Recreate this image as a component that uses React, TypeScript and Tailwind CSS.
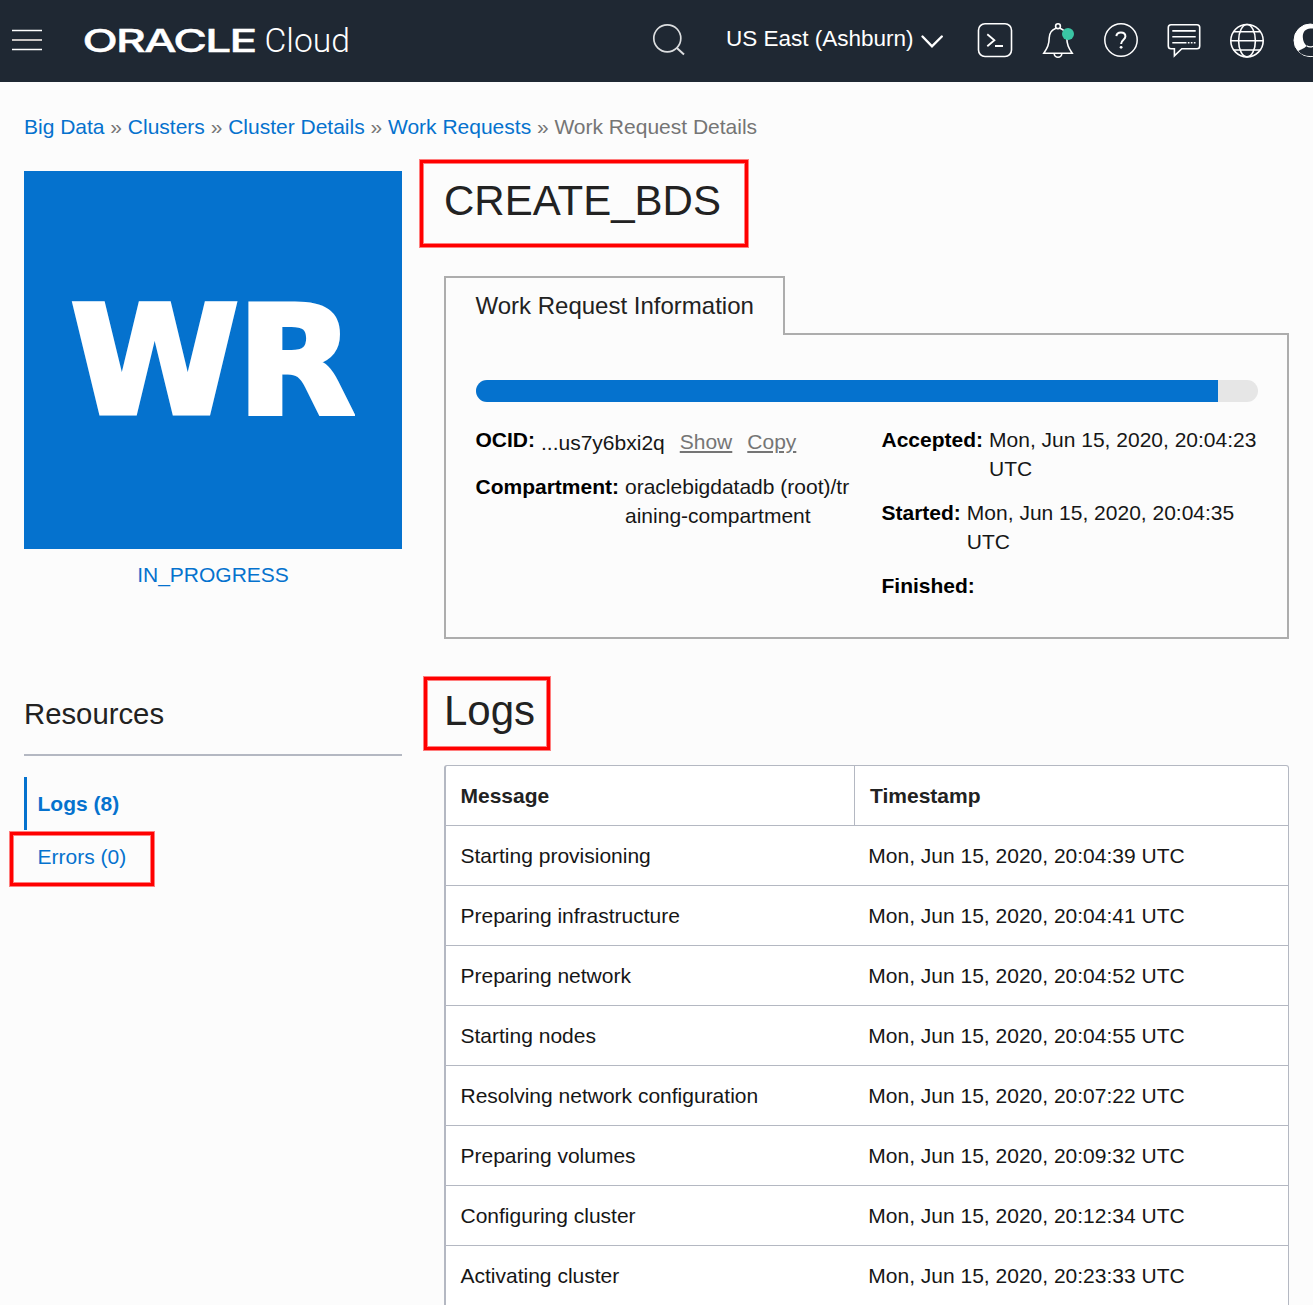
import type { ReactNode } from "react";

const logs = [
  ["Starting provisioning", "Mon, Jun 15, 2020, 20:04:39 UTC"],
  ["Preparing infrastructure", "Mon, Jun 15, 2020, 20:04:41 UTC"],
  ["Preparing network", "Mon, Jun 15, 2020, 20:04:52 UTC"],
  ["Starting nodes", "Mon, Jun 15, 2020, 20:04:55 UTC"],
  ["Resolving network configuration", "Mon, Jun 15, 2020, 20:07:22 UTC"],
  ["Preparing volumes", "Mon, Jun 15, 2020, 20:09:32 UTC"],
  ["Configuring cluster", "Mon, Jun 15, 2020, 20:12:34 UTC"],
  ["Activating cluster", "Mon, Jun 15, 2020, 20:23:33 UTC"],
];

const crumbs = ["Big Data", "Clusters", "Cluster Details", "Work Requests"];

const iconStroke = { fill: "none", stroke: "#fff", strokeWidth: 1.6 };

function Header() {
  return (
    <header className="flex h-[82px] shrink-0 items-start overflow-hidden bg-[#1f2833] pt-5 text-white">
      <svg className="ml-3 shrink-0" width="30" height="40" viewBox="12 20 30 40">
        <path d="M12 30.5H42M12 49.5H42" stroke="#fff" strokeWidth="1.3" />
        <path d="M12 40H42" stroke="#c9c5c3" strokeWidth="2" />
      </svg>
      <svg className="ml-[42px] shrink-0" width="266" height="40" viewBox="84 20 266 40" fill="#fff">
        <text x="82.5" y="52.4" fontFamily="Inter" fontWeight="500" fontSize="31" letterSpacing="-1.2" stroke="#fff" strokeWidth="0.4" textLength="173" lengthAdjust="spacingAndGlyphs">
          ORACLE
        </text>
        <text x="264.5" y="52.4" fontFamily="Roboto" fontWeight="300" fontSize="34" textLength="85.5" lengthAdjust="spacingAndGlyphs">
          Cloud
        </text>
      </svg>
      <svg className="ml-[300px] shrink-0" width="38" height="40" viewBox="650 20 38 40" fill="none" stroke="#dcdee0" strokeWidth="1.7">
        <circle cx="667.3" cy="38.3" r="13.5" />
        <path d="M676.6 47.8L684 54.6" strokeWidth="2" />
      </svg>
      <span className="ml-[38px] mt-[4px] w-[194px] shrink-0 whitespace-nowrap text-[22.5px] leading-[30px]">US East (Ashburn)</span>
      <svg className="shrink-0" width="24" height="40" viewBox="920 20 24 40" fill="none" stroke="#fff" strokeWidth="2.4" strokeLinecap="round">
        <path d="M922.5 36.5L932 46.3L941.8 36.5" />
      </svg>
      <svg className="ml-8 shrink-0" width="38" height="40" viewBox="976 20 38 40" {...iconStroke}>
        <rect x="978.5" y="23.7" width="33" height="32.8" rx="6.5" />
        <path d="M987.3 34.2L994.4 40.2L987.3 46.2M995 46H1003" strokeWidth="1.8" />
      </svg>
      <svg className="ml-[27px] shrink-0" width="36" height="40" viewBox="1041 20 36 40" {...iconStroke}>
        <circle cx="1058" cy="26.2" r="2.4" />
        <path d="M1055.9 28.2C1051 30 1049.3 33.5 1049.2 38C1049.1 44.5 1047.5 47.5 1043.8 53.3H1072.2C1068.5 47.5 1066.9 44.5 1066.8 38C1066.7 33.5 1065 30 1060.1 28.2" />
        <path d="M1054.2 53.5A3.8 3.8 0 0 0 1061.8 53.5" />
        <circle cx="1068" cy="34" r="6" fill="#3ac5a4" stroke="none" />
      </svg>
      <svg className="ml-[25px] shrink-0" width="38" height="40" viewBox="1102 20 38 40" {...iconStroke}>
        <circle cx="1121" cy="40" r="16.2" strokeWidth="1.5" />
        <path d="M1116.4 36.2C1116.6 33.8 1118.5 32.6 1120.9 32.6C1123.4 32.6 1125.4 34.1 1125.4 36.5C1125.4 39.6 1121.1 39.8 1121.1 43.9" strokeWidth="2" />
        <circle cx="1121.1" cy="47.3" r="1.4" fill="#fff" stroke="none" />
      </svg>
      <svg className="ml-[26px] shrink-0" width="36" height="40" viewBox="1166 20 36 40" {...iconStroke}>
        <path d="M1171 24.7H1197C1198.8 24.7 1199.7 25.6 1199.7 27.4V46C1199.7 47.8 1198.8 48.7 1197 48.7H1181.8L1174.4 55.8V48.7H1171C1169.2 48.7 1168.3 47.8 1168.3 46V27.4C1168.3 25.6 1169.2 24.7 1171 24.7Z" />
        <path d="M1172.3 30.9H1195.7M1172.3 36.7H1195.7M1172.3 42.7H1186.5" />
        <path d="M1187.8 42.7H1196" strokeDasharray="1.7 1.3" />
      </svg>
      <svg className="ml-[26px] shrink-0" width="38" height="40" viewBox="1228 20 38 40" {...iconStroke}>
        <circle cx="1247" cy="40.7" r="16.2" />
        <ellipse cx="1247" cy="40.7" rx="8.4" ry="16.2" />
        <path d="M1230.8 40.7H1263.2M1233.5 31.7H1260.5M1233.5 50H1260.5" />
      </svg>
      <svg className="ml-[26px] shrink-0" width="21" height="40" viewBox="1292 20 21 40">
        <circle cx="1310.3" cy="40.3" r="16.3" fill="#fff" stroke="#fff" strokeWidth="1" />
        <path d="M1310.3 28.5C1305.5 28.5 1302.6 32.3 1302.8 37.3C1303 41 1304.5 44 1306.3 45.5C1305.8 48.2 1301 49.3 1298.2 51C1301 54.3 1305 56 1310.3 56H1320V28.5Z" fill="#1f2833" />
        <path d="M1306.5 45.7C1308.5 47 1311 47.2 1313 46.3" fill="none" stroke="#fff" strokeWidth="1.2" />
      </svg>
    </header>
  );
}

function Highlight({ className }: { className: string }) {
  return (
    <div
      className={
        "pointer-events-none absolute border-[3px] border-[#ff0000] shadow-[0_0_0_1px_rgba(255,0,0,0.5),inset_0_0_0_1px_rgba(255,0,0,0.5)] " +
        className
      }
    />
  );
}

function Field({ label, children }: { label: string; children?: ReactNode }) {
  return (
    <div className="flex text-[21px] leading-[29px] text-[#161616]">
      <span className="mr-[6px] shrink-0 font-bold text-black">{label}</span>
      <div className="min-w-0 break-all">{children}</div>
    </div>
  );
}

function Sidebar() {
  return (
    <aside className="w-[378px] shrink-0">
      <div className="h-[378px] overflow-hidden bg-[#0572ce] pr-[3px] text-center">
        <span className="inline-block scale-x-[1.025] whitespace-nowrap pt-[101px] font-['DejaVu_Sans'] text-[149px] leading-[180px] font-bold tracking-[-2px] text-white [-webkit-text-stroke:5px_#fff]">
          WR
        </span>
      </div>
      <p className="mt-[11px] text-center text-[21px] leading-[29px] text-[#0572ce]">IN_PROGRESS</p>
      <h2 className="mt-[105px] border-b-2 border-[#b4b8c2] pb-[20px] text-[29.3px] leading-[40px] text-[#222]">Resources</h2>
      <nav className="relative mt-[21px] text-[21px] text-[#0572ce]">
        <a className="flex h-[53px] items-center border-l-[3px] border-[#0572ce] pl-[10.5px] font-bold">Logs (8)</a>
        <a className="flex h-[53px] items-center pl-[13.5px]">Errors (0)</a>
        <Highlight className="top-[55px] left-[-14px] h-[54px] w-[144px]" />
      </nav>
    </aside>
  );
}

function InfoPanel() {
  return (
    <section>
      <div className="relative z-10 mb-[-2px] flex h-[59px] w-[341px] items-center border-2 border-b-0 border-[#adadad] bg-[#fcfcfc] pb-[2px] pl-[29.5px] text-[24px] text-[#222]">
        Work Request Information
      </div>
      <div className="h-[306px] border-2 border-[#adadad] px-[30px] pt-[45px]">
        <div className="h-[22px] w-[782px] overflow-hidden rounded-full bg-[#e6e6e6]">
          <div className="h-full w-[742px] bg-[#0572ce]" />
        </div>
        <div className="mt-[23px] ml-[-0.5px] flex">
          <div className="w-[406px] space-y-[15px]">
            <Field label="OCID:">
              <div className="flex h-[32px] pt-[3px]">
                <span>...us7y6bxi2q</span>
                <a className="-mt-px ml-[15px] text-[#757575] underline">Show</a>
                <a className="-mt-px ml-[15px] text-[#757575] underline">Copy</a>
              </div>
            </Field>
            <Field label="Compartment:">
              <div className="w-[226px]">oraclebigdatadb (root)/training-compartment</div>
            </Field>
          </div>
          <div className="space-y-[15px]">
            <Field label="Accepted:">
              Mon, Jun 15, 2020, 20:04:23
              <br />
              UTC
            </Field>
            <Field label="Started:">
              Mon, Jun 15, 2020, 20:04:35
              <br />
              UTC
            </Field>
            <Field label="Finished:" />
          </div>
        </div>
      </div>
    </section>
  );
}

function LogsTable() {
  return (
    <div className="rounded-t-[3px] border border-l-2 border-[#b4b8c2] bg-white text-[21px]">
      <div className="flex h-[60px] border-b border-[#b4b8c2] font-bold text-[#222]">
        <div className="flex w-[409px] items-center border-r border-[#b4b8c2] pl-[14.5px]">Message</div>
        <div className="flex items-center pl-[15px]">Timestamp</div>
      </div>
      {logs.map(([message, time]) => (
        <div key={message} className="flex h-[60px] items-center border-b border-[#b4b8c2] text-[#161616]">
          <div className="w-[407px] pl-[14.5px]">{message}</div>
          <div className="pl-[15.3px]">{time}</div>
        </div>
      ))}
    </div>
  );
}

export default function App() {
  return (
    <div className="flex h-[1305px] w-[1313px] flex-col overflow-hidden bg-[#fcfcfc] font-['Liberation_Sans',Arial,sans-serif]">
      <Header />
      <main className="px-6">
        <nav className="mt-[30px] flex gap-[5.8px] text-[21px] leading-[29px] text-[#757575]">
          {crumbs.map((c) => (
            <span key={c} className="flex gap-[5.8px]">
              <a className="text-[#0572ce]">{c}</a>
              <span>»</span>
            </span>
          ))}
          <span>Work Request Details</span>
        </nav>
        <div className="mt-[30px] flex gap-[42px]">
          <Sidebar />
          <div className="w-[845px]">
            <div className="relative h-[105px]">
              <h1 className="text-[42px] leading-[60px] text-[#222]">CREATE_BDS</h1>
              <Highlight className="top-[-11px] left-[-24px] h-[87px] w-[328px]" />
            </div>
            <InfoPanel />
            <div className="relative h-[126px] pt-[42px]">
              <h2 className="text-[42px] leading-[60px] text-[#222]">Logs</h2>
              <Highlight className="top-[38px] left-[-20px] h-[73px] w-[126px]" />
            </div>
            <LogsTable />
          </div>
        </div>
      </main>
    </div>
  );
}
